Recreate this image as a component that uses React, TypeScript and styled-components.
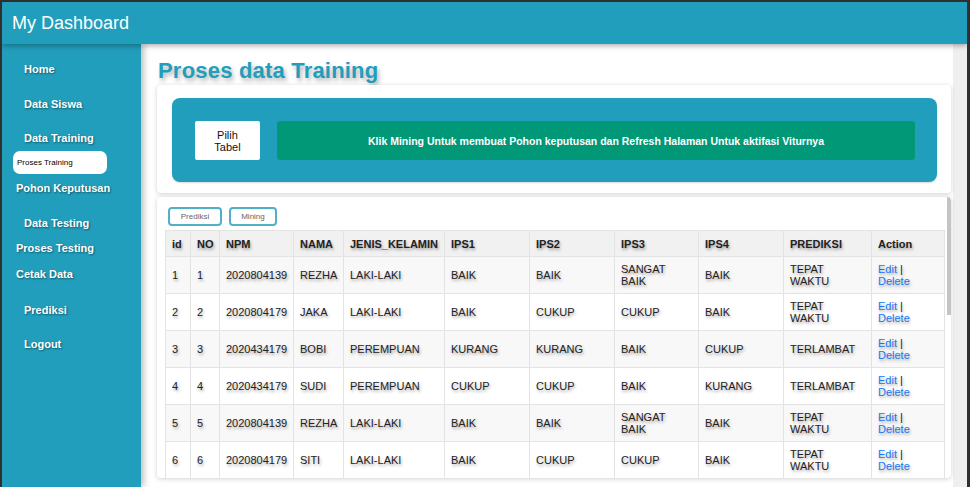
import styled, { createGlobalStyle } from 'styled-components';

const GlobalStyle = createGlobalStyle`
    html, body {
        margin: 0;
        padding: 0;
        background: #2f2f2f;
        overflow: hidden;
    }
    * {
        box-sizing: border-box;
    }
`;

const teal = '#219ebc';
const textShadow = '1px 2px 3px rgba(0, 0, 0, 0.35)';

const Frame = styled.div`
    width: 970px;
    height: 487px;
    border-top: 2px solid #2f2f2f;
    border-left: 2px solid #2f2f2f;
    border-right: 3px solid #2f2f2f;
    display: flex;
    flex-direction: column;
    font-family: "Liberation Sans", Arial, sans-serif;
    background: #fff;
    overflow: hidden;
`;

const TopBar = styled.header`
    height: 42px;
    flex-shrink: 0;
    background: ${teal};
    color: #fff;
    font-size: 18px;
    display: flex;
    align-items: center;
    padding-left: 10px;
    box-shadow: 0 2px 5px rgba(0, 0, 0, 0.3);
    position: relative;
    z-index: 2;
`;

const Body = styled.div`
    flex: 1;
    display: grid;
    grid-template-columns: 139px 1fr;
    min-height: 0;
`;

const Sidebar = styled.nav`
    background: ${teal};
    display: flex;
    flex-direction: column;
    align-items: flex-start;
    padding-top: 18px;
    box-shadow: 3px 0 6px rgba(0, 0, 0, 0.25);
    position: relative;
    z-index: 1;
`;

const NavItem = styled.div<{ $indent: number; $gap: number }>`
    margin-top: ${p => p.$gap}px;
    padding-left: ${p => p.$indent}px;
    line-height: 14px;
    font-size: 11px;
    font-weight: bold;
    color: #fff;
    text-shadow: 1px 1px 2px rgba(0, 0, 0, 0.45);
`;

const ActivePill = styled.div`
    margin-top: 6px;
    margin-left: 11px;
    width: 94px;
    height: 23px;
    border-radius: 7px;
    background: #fff;
    color: #000;
    font-size: 8px;
    display: flex;
    align-items: center;
    padding-left: 4px;
`;

const Main = styled.main`
    padding: 0 17px 0 16px;
    display: flex;
    flex-direction: column;
    min-height: 0;
    background: linear-gradient(to right, #fff 0, #fff 812px, #efefef 812px);
`;

const PageTitle = styled.h1`
    margin: 13px 0 0 1px;
    height: 28px;
    line-height: 28px;
    font-size: 22px;
    letter-spacing: 0.2px;
    font-weight: bold;
    color: ${teal};
    text-shadow: 2px 3px 4px rgba(0, 0, 0, 0.3);
`;

const Card = styled.section`
    background: #fff;
    border-radius: 4px;
    box-shadow: 0 1px 5px rgba(0, 0, 0, 0.18);
`;

const InfoCard = styled(Card)`
    padding: 13px 14px 11px 15px;
`;

const InfoPanel = styled.div`
    background: ${teal};
    border-radius: 8px;
    padding: 23px 22px 22px 23px;
    display: flex;
    gap: 17px;
    box-shadow: 0 1px 2px rgba(0, 0, 0, 0.15);
`;

const TableButton = styled.div`
    width: 65px;
    height: 39px;
    background: #fff;
    border-radius: 2px;
    display: flex;
    align-items: center;
    justify-content: center;
    text-align: center;
    font-size: 11px;
    line-height: 12px;
    color: #111;
`;

const Notice = styled.div`
    flex: 1;
    height: 39px;
    background: #009877;
    border-radius: 3px;
    display: flex;
    align-items: center;
    justify-content: center;
    color: #fff;
    font-size: 10.5px;
    font-weight: bold;
`;

const DataCard = styled(Card)`
    margin-top: 4px;
    height: 281px;
    overflow: hidden;
    display: flex;
    gap: 2px;
    padding-left: 8px;
`;

const DataContent = styled.div`
    padding-top: 10px;
`;

const ScrollRail = styled.div`
    width: 4px;
    display: flex;
    flex-direction: column;
`;

const ScrollThumb = styled.div`
    height: 118px;
    background: #c4c4c4;
`;

const ActionRow = styled.div`
    display: flex;
    gap: 7px;
    padding-left: 3px;
    margin-bottom: 4px;
`;

const OutlineButton = styled.div<{ $width: number }>`
    width: ${p => p.$width}px;
    height: 19px;
    border: 2px solid #4fb0c6;
    border-radius: 4px;
    font-size: 8px;
    color: #666;
    display: flex;
    align-items: center;
    justify-content: center;
`;

const Table = styled.table`
    width: 779px;
    border-collapse: collapse;
    table-layout: fixed;
    font-size: 11px;
    color: #222;
`;

const HeadCell = styled.th`
    height: 26px;
    background: #f1f1f1;
    border: 1px solid #e3e3e3;
    text-align: left;
    padding: 0 6px;
    font-weight: bold;
    text-shadow: ${textShadow};
    white-space: nowrap;
`;

const Row = styled.tr<{ $striped: boolean }>`
    background: ${p => (p.$striped ? '#f8f8f8' : '#fff')};
`;

const Cell = styled.td`
    height: 37px;
    border: 1px solid #e3e3e3;
    padding: 0 6px;
    line-height: 12px;
    text-shadow: ${textShadow};
    vertical-align: middle;
`;

const Link = styled.a`
    color: #1677f2;
    text-decoration: none;
`;

const columns = [
    { label: 'id', width: 25 },
    { label: 'NO', width: 29 },
    { label: 'NPM', width: 74 },
    { label: 'NAMA', width: 50 },
    { label: 'JENIS_KELAMIN', width: 101 },
    { label: 'IPS1', width: 85 },
    { label: 'IPS2', width: 85 },
    { label: 'IPS3', width: 84 },
    { label: 'IPS4', width: 85 },
    { label: 'PREDIKSI', width: 88 },
    { label: 'Action', width: 73 },
];

const rows = [
    ['2020804139', 'REZHA', 'LAKI-LAKI', 'BAIK', 'BAIK', 'SANGAT BAIK', 'BAIK', 'TEPAT WAKTU'],
    ['2020804179', 'JAKA', 'LAKI-LAKI', 'BAIK', 'CUKUP', 'CUKUP', 'BAIK', 'TEPAT WAKTU'],
    ['2020434179', 'BOBI', 'PEREMPUAN', 'KURANG', 'KURANG', 'BAIK', 'CUKUP', 'TERLAMBAT'],
    ['2020434179', 'SUDI', 'PEREMPUAN', 'CUKUP', 'CUKUP', 'BAIK', 'KURANG', 'TERLAMBAT'],
    ['2020804139', 'REZHA', 'LAKI-LAKI', 'BAIK', 'BAIK', 'SANGAT BAIK', 'BAIK', 'TEPAT WAKTU'],
    ['2020804179', 'SITI', 'LAKI-LAKI', 'BAIK', 'CUKUP', 'CUKUP', 'BAIK', 'TEPAT WAKTU'],
].map((r, i) => [String(i + 1), String(i + 1), ...r]);

const navTop = [
    { label: 'Home', indent: 22, gap: 0 },
    { label: 'Data Siswa', indent: 22, gap: 21 },
    { label: 'Data Training', indent: 22, gap: 20 },
];

const navBottom = [
    { label: 'Pohon Keputusan', indent: 14, gap: 7 },
    { label: 'Data Testing', indent: 22, gap: 21 },
    { label: 'Proses Testing', indent: 14, gap: 11 },
    { label: 'Cetak Data', indent: 14, gap: 12 },
    { label: 'Prediksi', indent: 22, gap: 22 },
    { label: 'Logout', indent: 22, gap: 20 },
];

const App = () => {
    return (
        <Frame>
            <GlobalStyle />
            <TopBar>My Dashboard</TopBar>
            <Body>
                <Sidebar>
                    {navTop.map(n => (
                        <NavItem key={n.label} $indent={n.indent} $gap={n.gap}>{n.label}</NavItem>
                    ))}
                    <ActivePill>Proses Training</ActivePill>
                    {navBottom.map(n => (
                        <NavItem key={n.label} $indent={n.indent} $gap={n.gap}>{n.label}</NavItem>
                    ))}
                </Sidebar>
                <Main>
                    <PageTitle>Proses data Training</PageTitle>
                    <InfoCard>
                        <InfoPanel>
                            <TableButton>Pilih<br />Tabel</TableButton>
                            <Notice>Klik Mining Untuk membuat Pohon keputusan dan Refresh Halaman Untuk aktifasi Viturnya</Notice>
                        </InfoPanel>
                    </InfoCard>
                    <DataCard>
                        <DataContent>
                            <ActionRow>
                                <OutlineButton $width={54}>Prediksi</OutlineButton>
                                <OutlineButton $width={48}>Mining</OutlineButton>
                            </ActionRow>
                            <Table>
                                <colgroup>
                                    {columns.map(c => <col key={c.label} style={{ width: c.width }} />)}
                                </colgroup>
                                <thead>
                                    <tr>
                                        {columns.map(c => <HeadCell key={c.label}>{c.label}</HeadCell>)}
                                    </tr>
                                </thead>
                                <tbody>
                                    {rows.map((r, i) => (
                                        <Row key={i} $striped={i % 2 === 0}>
                                            {r.map((v, j) => <Cell key={j}>{v}</Cell>)}
                                            <Cell>
                                                <Link href="#">Edit</Link> |<br />
                                                <Link href="#">Delete</Link>
                                            </Cell>
                                        </Row>
                                    ))}
                                </tbody>
                            </Table>
                        </DataContent>
                        <ScrollRail>
                            <ScrollThumb />
                        </ScrollRail>
                    </DataCard>
                </Main>
            </Body>
        </Frame>
    );
};

export default App;
